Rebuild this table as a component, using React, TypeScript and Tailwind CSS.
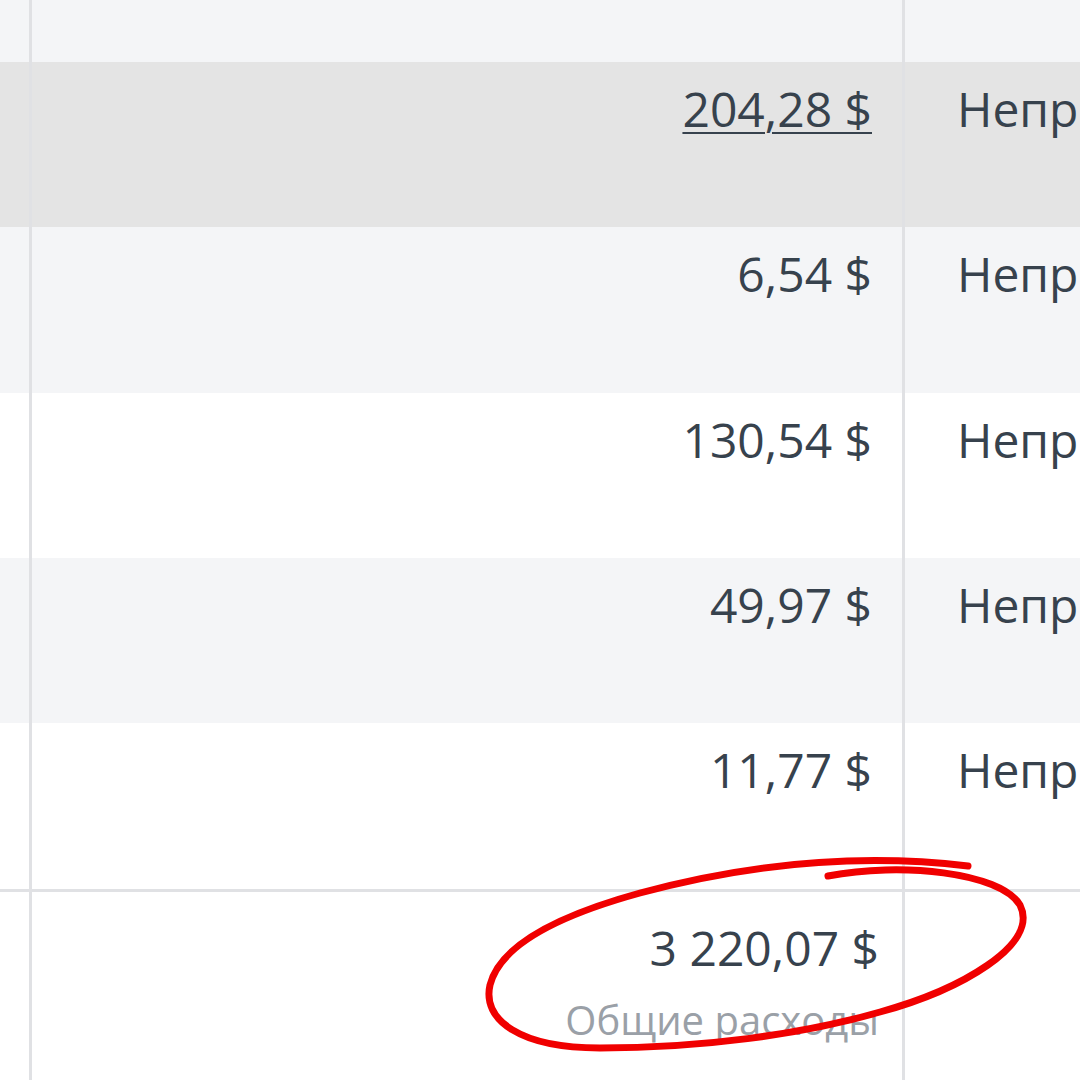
const rows = [
  { amount: '', bg: 'bg-[#f4f5f7]', h: 'h-[62px]', status: '' },
  { amount: '204,28 $', bg: 'bg-[#e4e4e4]', h: 'h-[165px]', status: 'Непроверено', link: true },
  { amount: '6,54 $', bg: 'bg-[#f4f5f7]', h: 'h-[166px]', status: 'Непроверено' },
  { amount: '130,54 $', bg: 'bg-white', h: 'h-[165px]', status: 'Непроверено' },
  { amount: '49,97 $', bg: 'bg-[#f4f5f7]', h: 'h-[165px]', status: 'Непроверено' },
  { amount: '11,77 $', bg: 'bg-white', h: 'h-[166px]', status: 'Непроверено' },
];

function Row({ amount, bg, h, status, link }: { amount: string; bg: string; h: string; status: string; link?: boolean }) {
  return (
    <div className={`flex ${bg} ${h}`}>
      <div className="w-[32px] shrink-0 border-r-[3px] border-[#e0e1e4]" />
      <div className="w-[873px] shrink-0 border-r-[3px] border-[#e0e1e4] pr-[30px] pt-[17px] text-right">
        {amount && (
          <span className={link ? 'underline decoration-2 underline-offset-[5px]' : ''}>{amount}</span>
        )}
      </div>
      <div className="flex-1 whitespace-nowrap pl-[52px] pt-[17px]">{status}</div>
    </div>
  );
}

export default function App() {
  return (
    <div
      className="relative h-[1080px] w-[1080px] overflow-hidden bg-white text-[48px] leading-[60px] text-[#37424d]"
      style={{ fontFamily: '"Open Sans", "Noto Sans", sans-serif' }}
    >
      {rows.map((r, i) => (
        <Row key={i} {...r} />
      ))}

      {/* totals */}
      <div className="flex h-[191px] border-t-[3px] border-[#e0e1e4] bg-white">
        <div className="w-[32px] shrink-0 border-r-[3px] border-[#e0e1e4]" />
        <div className="flex w-[873px] shrink-0 flex-col items-end border-r-[3px] border-[#e0e1e4] pr-[23px] pt-[26px]">
          <span>3 220,07 $</span>
          <span className="mt-[18px] text-[40px] leading-[48px] text-[#9aa0a7]">Общие расходы</span>
        </div>
        <div className="flex-1" />
      </div>

      {/* hand-drawn annotation */}
      <svg className="pointer-events-none absolute inset-0" width="1080" height="1080" viewBox="0 0 1080 1080">
        <path
          d="M828 876 C900 862 1000 872 1020 905 C1040 945 960 990 880 1012 C800 1035 700 1048 600 1048 C520 1048 482 1020 490 985 C500 945 560 915 640 893 C740 866 850 852 968 866"
          fill="none"
          stroke="#f00000"
          strokeWidth="7"
          strokeLinecap="round"
          strokeLinejoin="round"
        />
      </svg>
    </div>
  );
}
